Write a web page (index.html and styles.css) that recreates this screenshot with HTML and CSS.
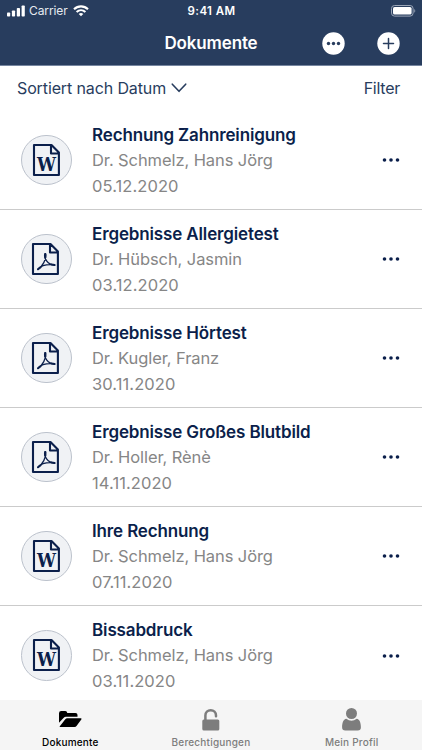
FILE: index.html
```html
<!DOCTYPE html>
<html lang="de">
<head>
<meta charset="utf-8">
<meta name="viewport" content="width=device-width, initial-scale=1">
<title>Dokumente</title>
<link rel="stylesheet" href="styles.css">
</head>
<body>
<svg class="defs" aria-hidden="true">
  <symbol id="word" viewBox="0 0 30 34">
    <path d="M2 2h17.500l7.400 7.500v22.500h-24.900z M19 2v8.500h8" class="line"/>
    <text x="14.500" y="28.300" class="glyph" textLength="19" lengthAdjust="spacingAndGlyphs">W</text>
  </symbol>
  <symbol id="pdf" viewBox="0 0 30 34">
    <path d="M2 2h17.500l7.400 7.500v22.500h-24.900z M19 2v8.500h8" class="line"/>
    <path d="M14 11.800c-1 2.200.2 5.200 1.800 7.400 1.500 2 4.200 3.700 7.500 3.900M14.600 11.800c.5 3-.1 5.800-1.800 8.800-1.500 2.700-3.300 5-5.600 6.600M7.300 26.700c2.500-3 7-4.700 15.600-4" class="thin"/>
    <path d="M14.300 12v3.500M7 27.300l2.600-2M20.300 22.500l3.300.5" class="thick"/>
  </symbol>
  <symbol id="dots" viewBox="0 0 18 6">
    <circle cx="2.500" cy="3" r="1.800"/><circle cx="9" cy="3" r="1.800"/><circle cx="15.500" cy="3" r="1.800"/>
  </symbol>
</svg>
<div class="screen">
  <header class="header">
    <div class="status">
      <div class="carrier">
        <svg width="18" height="12" viewBox="0 0 18 12" fill="#fff"><rect x="0" y="7.500" width="3.200" height="4" rx=".8"/><rect x="4.900" y="5.500" width="3.200" height="6" rx=".8"/><rect x="9.800" y="3" width="3.200" height="8.500" rx=".8"/><rect x="14.600" y="0.500" width="3.200" height="11" rx=".8"/></svg>
        <span class="carrier-name">Carrier</span>
        <svg width="16" height="12" viewBox="0 0 16 12" fill="none" stroke="#fff" stroke-width="2.100"><path d="M1 4.300c4-3.900 10-3.900 14 0M3.600 7.100c2.600-2.500 6.200-2.500 8.800 0"/><path d="M8 11.300L5.700 9c1.300-1.200 3.300-1.200 4.600 0z" fill="#fff" stroke="none"/></svg>
      </div>
      <span class="time">9:41 AM</span>
      <svg class="battery" width="25" height="12" viewBox="0 0 25 12"><rect x=".5" y=".5" width="21.600" height="10.600" rx="3" fill="none" stroke="#9aa5b7"/><rect x="2" y="2" width="18.600" height="7.600" rx="1.600" fill="#fff"/><path d="M23.300 4v3.800c1.300-.5 1.300-3.300 0-3.800z" fill="#9aa5b7"/></svg>
    </div>
    <div class="nav">
      <h1>Dokumente</h1>
      <div class="actions">
        <svg width="23" height="23" viewBox="0 0 23 23"><circle cx="11.500" cy="11.500" r="11.200" fill="#fff"/><g fill="#283d5e"><circle cx="6.500" cy="11.500" r="1.700"/><circle cx="11.500" cy="11.500" r="1.700"/><circle cx="16.500" cy="11.500" r="1.700"/></g></svg>
        <svg width="23" height="23" viewBox="0 0 23 23"><circle cx="11.500" cy="11.500" r="11.200" fill="#fff"/><path d="M6.500 11.500h10M11.500 6.500v10" stroke="#283d5e" stroke-width="1.500" stroke-linecap="round"/></svg>
      </div>
    </div>
  </header>
  <div class="toolbar">
    <span class="sort">Sortiert nach Datum</span>
    <svg class="chevron" width="16" height="10" viewBox="0 0 16 10" fill="none" stroke="#283d5e" stroke-width="1.600" stroke-linecap="round" stroke-linejoin="round"><path d="M1.300 1.200L8 8.300l6.700-7.100"/></svg>
    <span class="filter">Filter</span>
  </div>
  <main class="list">
    <article class="row"><div class="badge"><svg class="doc word"><use href="#word"/></svg></div><div class="info"><h2>Rechnung Zahnreinigung</h2><p>Dr. Schmelz, Hans Jörg</p><p class="date">05.12.2020</p></div><svg class="more"><use href="#dots"/></svg></article>
    <article class="row"><div class="badge"><svg class="doc"><use href="#pdf"/></svg></div><div class="info"><h2>Ergebnisse Allergietest</h2><p>Dr. Hübsch, Jasmin</p><p class="date">03.12.2020</p></div><svg class="more"><use href="#dots"/></svg></article>
    <article class="row"><div class="badge"><svg class="doc"><use href="#pdf"/></svg></div><div class="info"><h2>Ergebnisse Hörtest</h2><p>Dr. Kugler, Franz</p><p class="date">30.11.2020</p></div><svg class="more"><use href="#dots"/></svg></article>
    <article class="row"><div class="badge"><svg class="doc"><use href="#pdf"/></svg></div><div class="info"><h2>Ergebnisse Großes Blutbild</h2><p>Dr. Holler, Rènè</p><p class="date">14.11.2020</p></div><svg class="more"><use href="#dots"/></svg></article>
    <article class="row"><div class="badge"><svg class="doc word"><use href="#word"/></svg></div><div class="info"><h2>Ihre Rechnung</h2><p>Dr. Schmelz, Hans Jörg</p><p class="date">07.11.2020</p></div><svg class="more"><use href="#dots"/></svg></article>
    <article class="row"><div class="badge"><svg class="doc word"><use href="#word"/></svg></div><div class="info"><h2>Bissabdruck</h2><p>Dr. Schmelz, Hans Jörg</p><p class="date">03.11.2020</p></div><svg class="more"><use href="#dots"/></svg></article>
  </main>
  <nav class="tabs">
    <div class="tab active"><svg width="24" height="24" viewBox="0 0 24 24"><path d="M1 14.700V5.200Q1 3 3.200 3H7.300Q9 3 9.300 5H17.500Q19.500 5 19.500 7V8.800H8Q6.500 8.800 5.500 9.900z"/><path d="M1.800 18.300L7.300 11.300Q8 10.200 9.200 10.200H22.800Q24.200 10.200 23.300 11.500L18.700 17.700Q17.900 18.900 16.500 18.900H2.200Q1.400 18.900 1.800 18.300z"/></svg><span>Dokumente</span></div>
    <div class="tab"><svg width="24" height="24" viewBox="0 0 24 24"><path d="M6.400 12V7.500a5.300 5.300 0 0 1 10.600 0V8.300" fill="none" stroke="currentColor" stroke-width="2.500" stroke-linecap="round"/><rect x="3.300" y="11.500" width="17" height="11" rx="1.500"/></svg><span>Berechtigungen</span></div>
    <div class="tab"><svg width="24" height="24" viewBox="0 0 24 24"><circle cx="11.500" cy="5.500" r="5.500"/><path d="M6.300 10.800Q11.500 14.600 16.700 10.800C19.700 11.300 20.900 15 20.900 19.200Q20.900 22.500 17.700 22.500H5.300Q2.100 22.500 2.100 19.200C2.100 15 3.300 11.300 6.300 10.800z"/></svg><span>Mein Profil</span></div>
  </nav>
</div>
</body>
</html>
```
FILE: styles.css
```css
* { box-sizing: border-box; }
body { margin: 0; font-family: Inter, "Liberation Sans", sans-serif; background: #fff; }
h1, h2, p { margin: 0; }
svg { display: block; flex: none; }
.defs { display: none; }
.screen { width: 422px; height: 750px; display: flex; flex-direction: column; overflow: hidden; }
.header { flex: none; height: 66px; background: #283d5e; border-bottom: 1px solid #7686a0; color: #fff; }
.status { height: 22px; display: grid; grid-template-columns: 1fr auto 1fr; align-items: center; padding: 0 6px 0 7px; }
.carrier { display: flex; align-items: center; margin-top: -1px; }
.carrier-name { font-size: 12px; letter-spacing: -.1px; margin: 0 5px 0 4px; color: #e6eaf0; }
.time { font-size: 11.500px; font-weight: 600; letter-spacing: .4px; }
.battery { justify-self: end; margin-top: -1px; }
.nav { height: 43px; display: grid; grid-template-columns: 1fr auto 1fr; align-items: center; padding: 0 22px; }
h1 { grid-column: 2; font-size: 17px; line-height: 22px; font-weight: 600; letter-spacing: -.15px; margin-top: -1px; }
.actions { display: flex; justify-content: flex-end; gap: 32px; }
.toolbar { flex: none; height: 45px; display: flex; align-items: center; padding: 0 22px 1px 17px; font-size: 16px; letter-spacing: -.12px; color: #283d5e; }
.chevron { margin-left: 5px; }
.filter { margin-left: auto; letter-spacing: -.25px; }
.list { flex: 1; min-height: 0; overflow: hidden; }
.row { height: 99.100px; display: flex; align-items: center; padding: 0 22px 0 21px; border-bottom: 1px solid #cbcbcb; }
.badge { width: 50.500px; height: 50.500px; margin-top: -.5px; border: 1px solid #bcc2cc; border-radius: 50%; background: #f0f2f5; display: flex; align-items: center; justify-content: center; flex: none; }
.doc { width: 30px; height: 34px; margin-right: 1px; }
.word { margin: 0 0 0 1px; }
.line { fill: none; stroke: #0b1f4b; stroke-width: 2.100; stroke-linejoin: round; }
.thin { fill: none; stroke: #0b1f4b; stroke-width: 1.300; stroke-linecap: round; }
.thick { fill: none; stroke: #0b1f4b; stroke-width: 2; stroke-linecap: round; }
.glyph { font: bold 18px "DejaVu Serif", serif; fill: #0b1f4b; text-anchor: middle; }
.info { flex: 1; margin-left: 20.500px; padding-top: 2px; white-space: nowrap; }
h2 { font-size: 17px; line-height: 25px; font-weight: 600; letter-spacing: -.14px; color: #0b1f4b; }
.info p { font-size: 16.500px; line-height: 25.500px; letter-spacing: -.09px; color: #868686; }
.info .date { letter-spacing: .08px; padding-top: .2px; }
.more { width: 18px; height: 6px; fill: #0b1f4b; }
.tabs { flex: none; height: 50px; display: grid; grid-template-columns: repeat(3, 1fr); background: #f5f5f5; }
.tab { display: flex; flex-direction: column; align-items: center; padding-top: 8px; color: #7d7d7d; fill: currentColor; font-size: 10px; line-height: 12px; font-weight: 500; letter-spacing: .2px; }
.tab span { margin-top: 4px; }
.active { color: #000; }
```
